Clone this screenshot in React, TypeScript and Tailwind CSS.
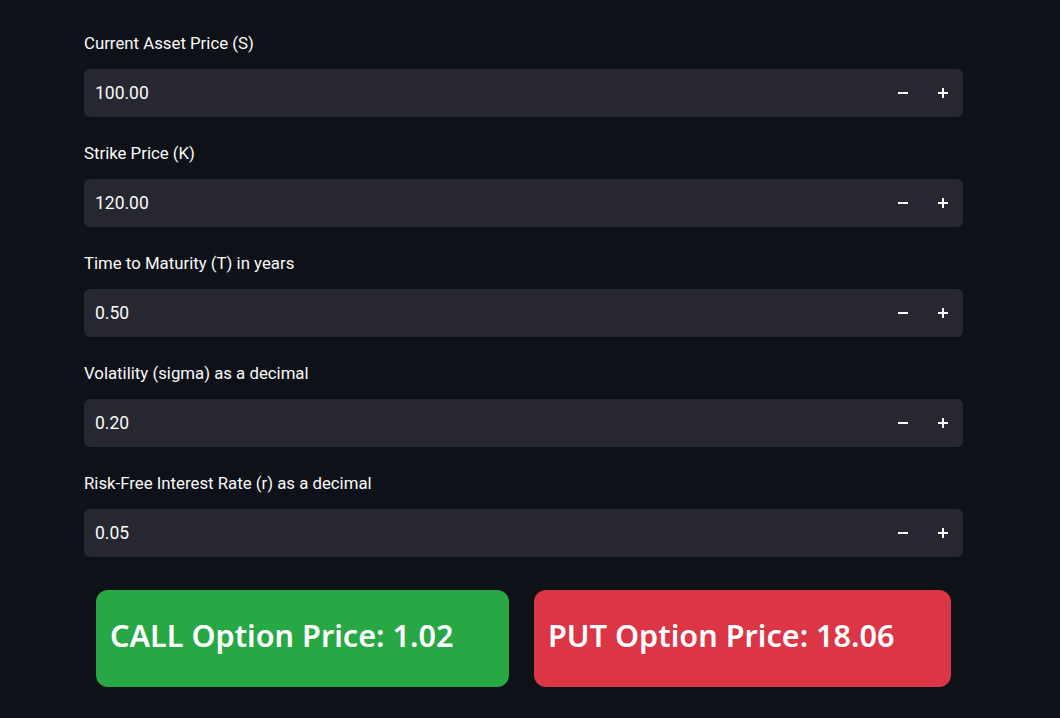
const fields = [
  { label: "Current Asset Price (S)", value: "100.00" },
  { label: "Strike Price (K)", value: "120.00" },
  { label: "Time to Maturity (T) in years", value: "0.50" },
  { label: "Volatility (sigma) as a decimal", value: "0.20" },
  { label: "Risk-Free Interest Rate (r) as a decimal", value: "0.05" },
]

const Minus = () => (
  <svg width="12" height="12" viewBox="0 0 12 12">
    <rect x="1" y="5" width="10" height="2" fill="#fafafa" />
  </svg>
)

const Plus = () => (
  <svg width="12" height="12" viewBox="0 0 12 12">
    <rect x="1" y="5" width="10" height="2" fill="#fafafa" />
    <rect x="5" y="1" width="2" height="10" fill="#fafafa" />
  </svg>
)

const NumberField = ({ label, value }: { label: string; value: string }) => (
  <div className="flex flex-col">
    <div className="h-[24px] pt-[2px] flex items-center text-[16.8px] text-[#fafafa]" style={{ fontFamily: "Roboto, sans-serif" }}>
      {label}
    </div>
    <div className="mt-[14px] h-[48px] flex items-center rounded-[6px] bg-[#262730]">
      <span className="flex-1 pl-[11px] pt-[1px] text-[17.5px] text-[#fafafa]" style={{ fontFamily: "Roboto, sans-serif" }}>
        {value}
      </span>
      <button className="w-[40px] h-full flex items-center justify-center">
        <Minus />
      </button>
      <button className="w-[40px] h-full flex items-center justify-center">
        <Plus />
      </button>
    </div>
  </div>
)

export default function App() {
  return (
    <div
      className="min-h-screen w-full bg-[#0e1117]"
      style={{ fontFamily: '"Noto Sans", sans-serif' }}
    >
      <div className="ml-[84px] w-[879px] pt-[31px] flex flex-col gap-[24px]">
        {fields.map((f) => (
          <NumberField key={f.label} label={f.label} value={f.value} />
        ))}
      </div>
      <div className="ml-[96px] mt-[33px] flex gap-[25px]">
        <div className="w-[413px] h-[97px] rounded-[12px] bg-[#28a745] flex items-center pl-[14px] pb-[6px] text-[30.6px] font-semibold text-white">
          CALL Option Price: 1.02
        </div>
        <div className="w-[417px] h-[97px] rounded-[12px] bg-[#dc3545] flex items-center pl-[14px] pb-[6px] text-[30.6px] font-semibold text-white">
          PUT Option Price: 18.06
        </div>
      </div>
    </div>
  )
}
